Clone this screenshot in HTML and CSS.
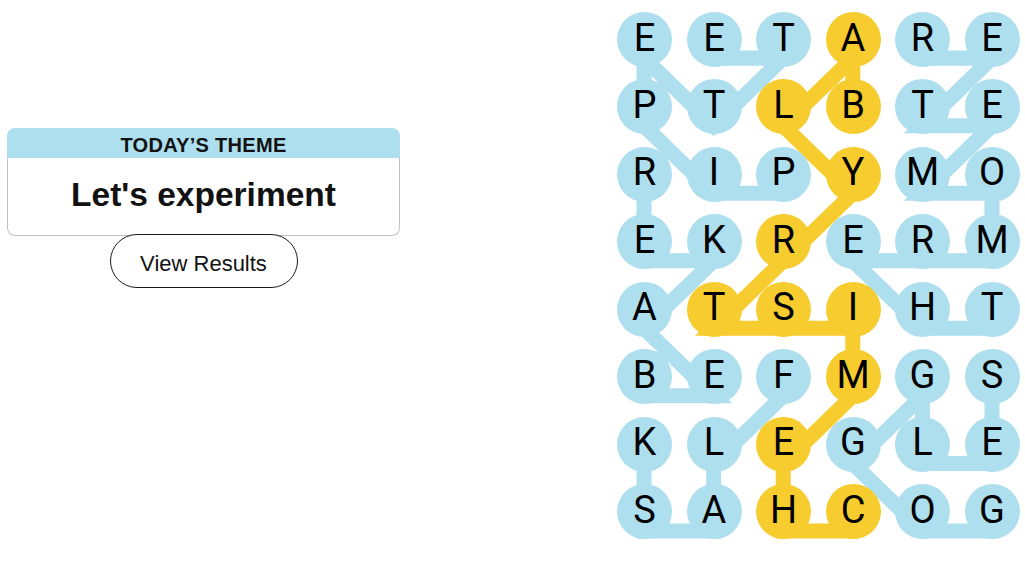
FILE: index.html
```html
<!DOCTYPE html>
<html lang="en">
<head>
<meta charset="utf-8">
<title>Strands</title>
<link rel="stylesheet" href="styles.css">
</head>
<body>
<main class="page">
  <section class="side">
    <div class="card">
      <div class="card-head">TODAY’S THEME</div>
      <div class="card-body">Let's experiment</div>
    </div>
    <button class="btn" type="button">View Results</button>
  </section>

  <section class="board">
    <svg class="links" width="403" height="528" viewBox="0 0 402.5 527.2" aria-hidden="true">
      <g fill="none" stroke-width="15" stroke-linejoin="miter" stroke-miterlimit="4">
        <g stroke="#aedfee">
          <polyline points="166,181 96.5,181 27,113.5 27,46 96.5,113.5 166,46 96.5,46"/>
          <polyline points="27,383.3 96.5,383.3 27,315.8 96.5,248.4 27,248.4 27,181"/>
          <polyline points="166,383.3 96.5,450.8 96.5,518.2 27,518.2 27,450.8"/>
          <polyline points="374.5,518.2 305,518.2 235.5,450.8 305,383.3 305,450.8 374.5,450.8 374.5,383.3"/>
          <polyline points="374.5,315.8 305,315.8 235.5,248.4 305,248.4 374.5,248.4 374.5,181 305,181 374.5,113.5 305,113.5 374.5,46 305,46"/>
        </g>
        <polyline stroke="#f7cc2e" points="235.5,518.2 166,518.2 166,450.8 235.5,383.3 235.5,315.8 166,315.8 96.5,315.8 166,248.4 235.5,181 166,113.5 235.5,46 235.5,113.5"/>
      </g>
    </svg>
    <div class="grid">
      <div class="cell">E</div><div class="cell">E</div><div class="cell">T</div><div class="cell span">A</div><div class="cell">R</div><div class="cell">E</div>
      <div class="cell">P</div><div class="cell">T</div><div class="cell span">L</div><div class="cell span">B</div><div class="cell">T</div><div class="cell">E</div>
      <div class="cell">R</div><div class="cell">I</div><div class="cell">P</div><div class="cell span">Y</div><div class="cell">M</div><div class="cell">O</div>
      <div class="cell">E</div><div class="cell">K</div><div class="cell span">R</div><div class="cell">E</div><div class="cell">R</div><div class="cell">M</div>
      <div class="cell">A</div><div class="cell span">T</div><div class="cell span">S</div><div class="cell span">I</div><div class="cell">H</div><div class="cell">T</div>
      <div class="cell">B</div><div class="cell">E</div><div class="cell">F</div><div class="cell span">M</div><div class="cell">G</div><div class="cell">S</div>
      <div class="cell">K</div><div class="cell">L</div><div class="cell span">E</div><div class="cell">G</div><div class="cell">L</div><div class="cell">E</div>
      <div class="cell">S</div><div class="cell">A</div><div class="cell span">H</div><div class="cell span">C</div><div class="cell">O</div><div class="cell">G</div>
    </div>
  </section>
</main>
</body>
</html>
```

FILE: styles.css
```css
html, body {
  margin: 0;
  padding: 0;
  background: #ffffff;
}

body {
  width: 1025px;
  height: 577px;
  overflow: hidden;
  font-family: "Liberation Sans", Arial, sans-serif;
  color: #121212;
}

.page {
  display: flex;
  align-items: flex-start;
}

.side {
  width: 393px;
  margin: 128px 0 0 7px;
  display: flex;
  flex-direction: column;
  align-items: center;
}

.card {
  width: 100%;
  display: flex;
  flex-direction: column;
}

.card-head {
  height: 30px;
  padding-top: 5px;
  box-sizing: border-box;
  background: #aedfee;
  border-radius: 8px 8px 0 0;
  display: flex;
  align-items: center;
  justify-content: center;
  font-weight: 700;
  font-size: 20px;
  letter-spacing: 0.3px;
  color: #121212;
}

.card-body {
  height: 78px;
  border: 1px solid #c2c2c2;
  border-top: none;
  border-radius: 0 0 8px 8px;
  display: flex;
  align-items: center;
  justify-content: center;
  font-weight: 700;
  font-size: 33.5px;
  color: #121212;
  padding-bottom: 4px;
  box-sizing: border-box;
}

.btn {
  margin-top: -2px;
  width: 188px;
  height: 54px;
  box-sizing: border-box;
  border: 1px solid #1a1a1a;
  border-radius: 27px;
  background: #ffffff;
  font-family: "Liberation Sans", Arial, sans-serif;
  font-size: 22px;
  color: #121212;
  padding: 5px 0 0;
  display: flex;
  align-items: center;
  justify-content: center;
}

.board {
  position: relative;
  margin: 12px 0 0 217px;
  width: 402.5px;
  height: 527.2px;
}

.links {
  position: absolute;
  left: 0;
  top: 0;
  overflow: visible;
}

.grid {
  position: relative;
  display: grid;
  grid-template-columns: repeat(6, 55px);
  grid-auto-rows: 55px;
  column-gap: 14.5px;
  row-gap: 12.46px;
}

.cell {
  width: 55px;
  height: 55px;
  border-radius: 50%;
  background: #aedfee;
  display: flex;
  align-items: center;
  justify-content: center;
  font-family: Roboto, "Liberation Sans", sans-serif;
  font-size: 38px;
  line-height: 1;
  color: #000000;
  padding-bottom: 4px;
  box-sizing: border-box;
}

.cell.span {
  background: #f7cc2e;
}
```
